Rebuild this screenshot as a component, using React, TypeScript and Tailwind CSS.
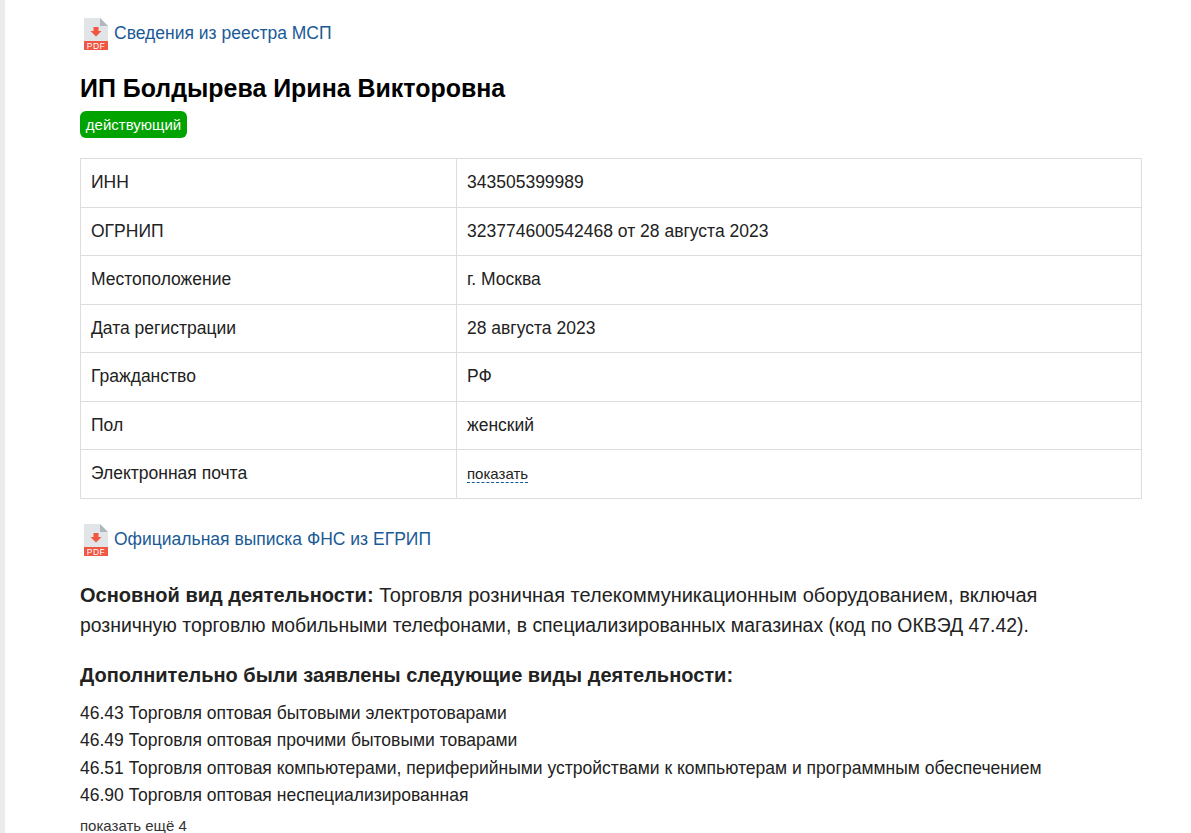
import React from 'react';

const PdfIcon = () => (
  <svg width="24" height="32" viewBox="0 0 24 32" className="shrink-0">
    <path d="M0 0H16L24 8V32H0Z" fill="#e2e5e7" />
    <path d="M16 0L24 8H16Z" fill="#b0b7bd" />
    <path d="M9.5 9H14.5V13H17.5L12 18.5L6.5 13H9.5Z" fill="#f15642" />
    <path d="M0 23H24V31.5Q24 32 23 32H1Q0 32 0 31.5Z" fill="#f15642" />
    <text x="12" y="30.5" textAnchor="middle" fontSize="8.5" letterSpacing="0.5" fill="#fff" fontFamily="Liberation Sans, sans-serif">
      PDF
    </text>
  </svg>
);

const PdfLink = ({ children }: { children: React.ReactNode }) => (
  <a className="flex items-center gap-[6px] pl-1 text-[#1a5a96] text-[17.5px] h-8">
    <PdfIcon />
    <span className="-mt-[2px]">{children}</span>
  </a>
);

const rows = [
  ['ИНН', '343505399989'],
  ['ОГРНИП', '323774600542468 от 28 августа 2023'],
  ['Местоположение', 'г. Москва'],
  ['Дата регистрации', '28 августа 2023'],
  ['Гражданство', 'РФ'],
  ['Пол', 'женский'],
];

const activities = [
  '46.43 Торговля оптовая бытовыми электротоварами',
  '46.49 Торговля оптовая прочими бытовыми товарами',
  '46.51 Торговля оптовая компьютерами, периферийными устройствами к компьютерам и программным обеспечением',
  '46.90 Торговля оптовая неспециализированная',
];

const App = () => {
  return (
    <div className="flex h-[833px] overflow-hidden bg-white font-['Liberation_Sans',Arial,sans-serif] text-[#222]">
      <div className="w-[5px] shrink-0 bg-[#ebebeb]" />
      <main className="w-[1062px] ml-[75px] pt-[18px]">
        {/* Registry link */}
        <PdfLink>Сведения из реестра МСП</PdfLink>

        <h1 className="mt-[21px] text-[24.95px] leading-[34px] font-bold text-black">
          ИП Болдырева Ирина Викторовна
        </h1>
        <span className="mt-[6px] flex items-center justify-center w-[107px] h-[27px] pt-[1px] rounded-[6px] bg-[#00a300] text-white text-[15px]">
          действующий
        </span>

        {/* Details table */}
        <div className="mt-5 border-t border-l border-r border-[#dddddd]">
          {rows.map(([label, value]) => (
            <div key={label} className="flex h-[48.5px] border-b border-[#dddddd] text-[17.5px]">
              <div className="w-[376px] shrink-0 flex items-center pl-[10px] pb-[1px] border-r border-[#dddddd]">
                {label}
              </div>
              <div className="flex items-center pl-[10px] pb-[1px]">{value}</div>
            </div>
          ))}
          <div className="flex h-[48.5px] border-b border-[#dddddd] text-[17.5px]">
            <div className="w-[376px] shrink-0 flex items-center pl-[10px] pb-[1px] border-r border-[#dddddd]">
              Электронная почта
            </div>
            <div className="flex items-center pl-[10px] pt-[2px]">
              <span className="text-[15px] leading-[16px] border-b border-dashed border-[#1a5a96]">показать</span>
            </div>
          </div>
        </div>

        <div className="mt-[25px]">
          <PdfLink>
            <span className="relative top-[1px]">Официальная выписка ФНС из ЕГРИП</span>
          </PdfLink>
        </div>

        {/* Main activity */}
        <p className="mt-[24px] text-[19.4px] leading-[30px]">
          <span className="text-[20px]">
            <b>Основной вид деятельности:</b> Торговля розничная телекоммуникационным оборудованием, включая
          </span>
          <br />
          розничную торговлю мобильными телефонами, в специализированных магазинах (код по ОКВЭД 47.42).
        </p>

        <h2 className="mt-[20px] text-[20px] leading-[30px] font-bold">
          Дополнительно были заявлены следующие виды деятельности:
        </h2>

        <ul className="mt-[10px] text-[17.53px] leading-[27.5px]">
          {activities.map((item) => (
            <li key={item}>{item}</li>
          ))}
        </ul>

        <div className="mt-[6px] text-[15px] leading-[20px] text-[#333]">показать ещё 4</div>
      </main>
    </div>
  );
};

export default App;
